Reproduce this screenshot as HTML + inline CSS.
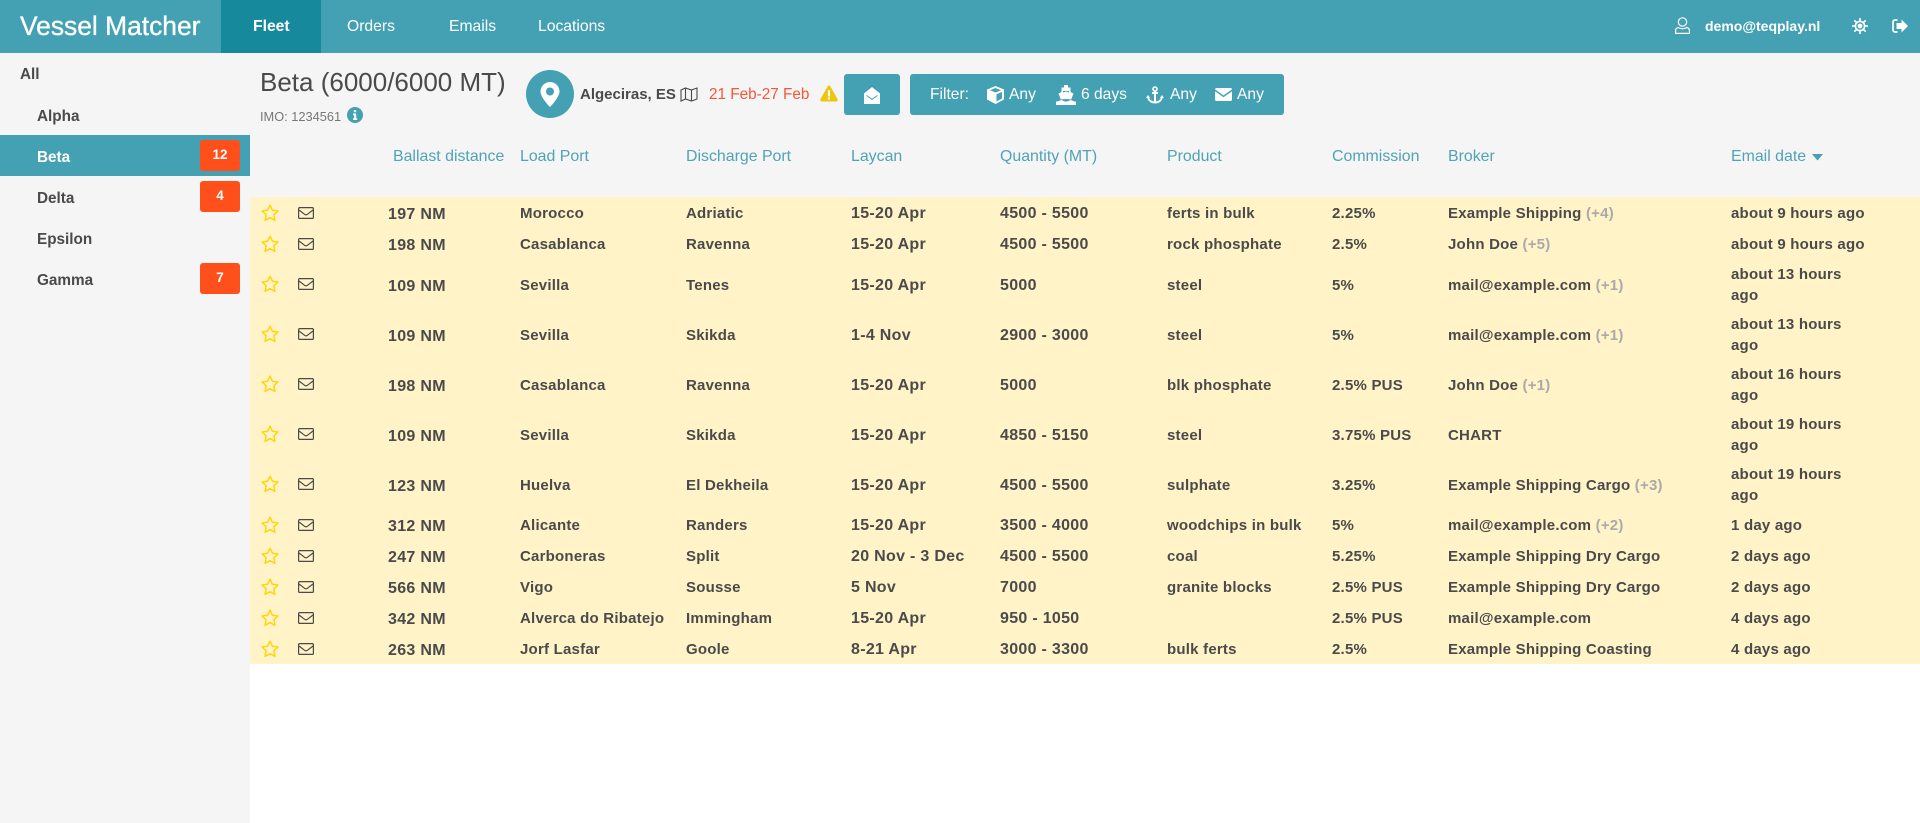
<!DOCTYPE html>
<html><head><meta charset="utf-8"><title>Vessel Matcher</title>
<style>
*{box-sizing:border-box}
html,body{margin:0;padding:0;width:1920px;height:823px;overflow:hidden;background:#fff;font-family:"Liberation Sans",sans-serif;color:#4a4a4a}
.a{position:absolute;white-space:nowrap}
svg{position:absolute;display:block}
#nav{left:0;top:0;width:1920px;height:53px;background:#43a1b3}
#active{left:221px;top:0;width:100px;height:53px;background:#168a9c}
.nv{top:17px;font-size:15.7px;line-height:20px;color:#fff}
#side{left:0;top:53px;width:250px;height:770px;background:#f5f5f5}
#head{left:250px;top:53px;width:1670px;height:144px;background:#f5f5f5}
.si{font-size:15.3px;font-weight:bold;line-height:20px;color:#4a4a4a}
.bd{left:200px;width:40px;height:31px;background:#ff4f1a;border-radius:3px;color:#fff;font-weight:bold;font-size:13.5px;text-align:center;line-height:30px}
.th{top:147px;font-size:15.9px;line-height:20px;color:#4fa3b5}
table{position:absolute;left:250px;top:197px;width:1670px;border-collapse:collapse;table-layout:fixed;background:#fff3c7}
td{padding:2px 0 0;font-size:15px;letter-spacing:.22px;font-weight:bold;line-height:21px;vertical-align:middle;white-space:nowrap;color:#4a4a4a;position:relative}
td.n{font-size:16px;letter-spacing:.3px}
td.b{font-size:16px;letter-spacing:.3px;padding-top:4px}
td.i{padding-top:0}
tr.s{height:31px}tr.d{height:50px}
td b{font-weight:bold;color:#aaa}
td svg{position:static;margin-left:11px}
td.m svg{margin-left:0}
.btn{background:#43a1b3;border-radius:3px}
.ft{top:85px;color:#fff;font-size:15.6px;line-height:20px}
</style></head><body>
<svg width="0" height="0" style="position:absolute"><defs>
<symbol id="star" viewBox="0 0 18 18"><path d="M9 1.2l2.400 5 5.500.8-4 3.800 1 5.500L9 13.700l-4.900 2.600 1-5.500-4-3.800 5.500-.8z" fill="none" stroke="#ffd60a" stroke-width="1.500" stroke-linejoin="round"/></symbol>
<symbol id="mail" viewBox="0 0 16 12"><rect x=".6" y=".6" width="14.800" height="10.800" rx="1.200" fill="none" stroke="#4a4a4a" stroke-width="1.200"/><path d="M1 3l5.600 4.300c.8.600 2 .6 2.800 0L15 3" fill="none" stroke="#4a4a4a" stroke-width="1.200"/></symbol>
</defs></svg>

<div class="a" id="nav"></div>
<div class="a" id="active"></div>
<div class="a" style="left:20px;top:10px;font-size:26.4px;line-height:33px;color:#fff;-webkit-text-stroke:.35px #fff">Vessel Matcher</div>
<div class="a nv" style="left:253px;font-weight:bold">Fleet</div>
<div class="a nv" style="left:347px">Orders</div>
<div class="a nv" style="left:449px">Emails</div>
<div class="a nv" style="left:538px">Locations</div>

<svg style="left:1675px;top:17px" width="15" height="17" viewBox="0 0 15 17" fill="none" stroke="#fff" stroke-width="1.200"><circle cx="7.500" cy="5" r="4.200"/><path d="M3.500 10.500c1 1 2.500 1.200 4 1.200s3-.2 4-1.200c1.800.3 2.900 1.400 2.900 3v2.900H.6v-2.900c0-1.600 1.100-2.700 2.900-3z"/></svg>
<div class="a" style="left:1705px;top:17px;font-size:14px;line-height:18px;font-weight:bold;color:#fff">demo@teqplay.nl</div>
<svg style="left:1852px;top:18px" width="16" height="16" viewBox="0 0 16 16"><circle cx="8" cy="8" r="4.600" fill="none" stroke="#fff" stroke-width="1.600"/><circle cx="8" cy="8" r="2.400" fill="#fff"/><path d="M8 0v3M8 13v3M0 8h3M13 8h3M2.300 2.300l2.200 2.200M11.500 11.500l2.200 2.200M2.300 13.700l2.200-2.200M11.500 4.500l2.200-2.200" stroke="#fff" stroke-width="1.600"/></svg>
<svg style="left:1892px;top:19px" width="16" height="14" viewBox="0 0 16 14"><path d="M5.500 1H3a2 2 0 0 0-2 2v8a2 2 0 0 0 2 2h2.500" fill="none" stroke="#fff" stroke-width="1.700"/><path d="M9.500 .5L16 7l-6.500 6.500V10H4.500V4h5z" fill="#fff"/></svg>

<div class="a" id="side"></div>
<div class="a" id="head"></div>
<div class="a" style="left:0;top:135px;width:250px;height:41px;background:#43a1b3"></div>
<div class="a si" style="left:20px;top:65px">All</div>
<div class="a si" style="left:37px;top:107px">Alpha</div>
<div class="a si" style="left:37px;top:148px;color:#fff">Beta</div>
<div class="a si" style="left:37px;top:189px">Delta</div>
<div class="a si" style="left:37px;top:230px">Epsilon</div>
<div class="a si" style="left:37px;top:271px">Gamma</div>
<div class="a bd" style="top:140px">12</div>
<div class="a bd" style="top:181px">4</div>
<div class="a bd" style="top:263px">7</div>

<div class="a" style="left:260px;top:65px;font-size:26px;line-height:34px;color:#4a4a4a">Beta (6000/6000 MT)</div>
<div class="a" style="left:260px;top:108px;font-size:12.800px;line-height:17px;color:#777">IMO: 1234561</div>
<svg style="left:347px;top:107px" width="16" height="16" viewBox="0 0 16 16"><circle cx="8" cy="8" r="8" fill="#43a1b3"/><rect x="6.800" y="3" width="2.400" height="2.200" fill="#fff"/><path d="M6 6.500h3.200V11.200h1V13H6v-1.800h1V8.200H6z" fill="#fff"/></svg>

<div class="a" style="left:526px;top:70px;width:48px;height:48px;border-radius:50%;background:#43a1b3"></div>
<svg style="left:540px;top:82px" width="20" height="25" viewBox="0 0 20 25"><path fill-rule="evenodd" d="M10 0a9.500 9.500 0 0 1 9.500 9.500C19.500 14 14 21 10 25 6 21 .5 14 .5 9.500A9.500 9.500 0 0 1 10 0zm0 5.500a4 4 0 1 0 0 8 4 4 0 0 0 0-8z" fill="#fff"/></svg>
<div class="a" style="left:580px;top:85px;font-size:15px;line-height:19px;font-weight:bold;color:#4a4a4a">Algeciras, ES</div>
<svg style="left:680px;top:87px" width="18" height="15" viewBox="0 0 18 15" fill="none" stroke="#4a4a4a" stroke-width="1.100"><path d="M1 3l4.500-2 6 2L17 1v11l-5.500 2-6-2L1 14zM5.500 1v11M11.500 3v11"/></svg>
<div class="a" style="left:709px;top:85px;font-size:15.300px;line-height:19px;color:#f5573b">21 Feb-27 Feb</div>
<svg style="left:820px;top:85px" width="18" height="17" viewBox="0 0 18 17"><path d="M9 .5c.6 0 1 .3 1.300.8l7.300 13c.5 1-.1 2.200-1.300 2.200H1.700c-1.200 0-1.800-1.200-1.300-2.200l7.300-13C8 .8 8.400.5 9 .5z" fill="#eec60f"/><rect x="8" y="5" width="2" height="6.500" fill="#fff"/><rect x="8" y="12.500" width="2" height="2" fill="#fff"/></svg>

<div class="a btn" style="left:844px;top:74px;width:56px;height:41px"></div>
<svg style="left:864px;top:87px" width="16" height="17" viewBox="0 0 16 17"><path d="M0 6.500L8 0l8 6.500V17H0z" fill="#fff"/><path d="M2.500 8.500L8 12.300l5.500-3.800" fill="none" stroke="#43a1b3" stroke-width="1"/></svg>
<div class="a btn" style="left:910px;top:74px;width:374px;height:41px"></div>
<div class="a ft" style="left:930px">Filter:</div>
<svg style="left:987px;top:86px" width="17" height="18" viewBox="0 0 17 18"><path d="M8.500 0L17 3.500v10L8.500 18 0 13.500v-10zM8.500 2L3 4.200l5.500 2.300L14 4.200zM9.500 8.200V15.500l5.500-3V6z" fill="#fff" fill-rule="evenodd"/></svg>
<div class="a ft" style="left:1009px">Any</div>
<svg style="left:1056px;top:85px" width="20" height="20" viewBox="0 0 20 20"><path d="M8 0h4v2.500h2.500V7l3 1.500-2.300 6c-1.700 0-3-.5-5.200-.5s-3.500.5-5.200.5L2.500 8.500l3-1.500V2.500H8z" fill="#fff"/><path d="M7 6h6v1.500l-3-1-3 1z" fill="#43a1b3"/><path d="M0 16.500c3.500 0 3-1.300 5-1.300s2.500 1.300 5 1.300 3-1.300 5-1.300 1.500 1.300 5 1.300V20H0z" fill="#fff"/></svg>
<div class="a ft" style="left:1081px">6 days</div>
<svg style="left:1146px;top:86px" width="18" height="18" viewBox="0 0 18 18"><circle cx="9" cy="3" r="2" fill="none" stroke="#fff" stroke-width="1.600"/><path d="M6 7h6M9 5v11.500" stroke="#fff" stroke-width="2"/><path d="M2 10c0 4 3 6.500 7 6.500s7-2.500 7-6.500" fill="none" stroke="#fff" stroke-width="2"/><path d="M0 12l2-3 2 3zM14 12l2-3 2 3z" fill="#fff"/></svg>
<div class="a ft" style="left:1170px">Any</div>
<svg style="left:1215px;top:88px" width="17" height="13" viewBox="0 0 17 13"><path d="M1.500 0h14c.8 0 1.500.6 1.500 1.400L8.500 7.500 0 1.400C0 .6.700 0 1.500 0z" fill="#fff"/><path d="M0 3.200v8.300c0 .8.700 1.500 1.500 1.500h14c.8 0 1.500-.7 1.500-1.500V3.200L8.500 9.300z" fill="#fff"/></svg>
<div class="a ft" style="left:1237px">Any</div>

<div class="a th" style="left:393px">Ballast distance</div>
<div class="a th" style="left:520px">Load Port</div>
<div class="a th" style="left:686px">Discharge Port</div>
<div class="a th" style="left:851px">Laycan</div>
<div class="a th" style="left:1000px">Quantity (MT)</div>
<div class="a th" style="left:1167px">Product</div>
<div class="a th" style="left:1332px">Commission</div>
<div class="a th" style="left:1448px">Broker</div>
<div class="a th" style="left:1731px">Email date</div>
<svg style="left:1812px;top:154px" width="11" height="7" viewBox="0 0 11 7"><path d="M0 0h11L5.500 6.500z" fill="#43a1b3"/></svg>

<table>
<colgroup><col style="width:48px"><col style="width:90px"><col style="width:132px"><col style="width:166px"><col style="width:165px"><col style="width:149px"><col style="width:167px"><col style="width:165px"><col style="width:116px"><col style="width:283px"><col style="width:189px"></colgroup>
<tr class="s"><td class="i"><svg width="18" height="18"><use href="#star"/></svg></td><td class="m i"><svg width="16" height="12"><use href="#mail"/></svg></td><td class="b">197 NM</td><td>Morocco</td><td>Adriatic</td><td class="n">15-20 Apr</td><td class="n">4500 - 5500</td><td>ferts in bulk</td><td>2.25%</td><td>Example Shipping <b>(+4)</b></td><td>about 9 hours ago</td></tr>
<tr class="s"><td class="i"><svg width="18" height="18"><use href="#star"/></svg></td><td class="m i"><svg width="16" height="12"><use href="#mail"/></svg></td><td class="b">198 NM</td><td>Casablanca</td><td>Ravenna</td><td class="n">15-20 Apr</td><td class="n">4500 - 5500</td><td>rock phosphate</td><td>2.5%</td><td>John Doe <b>(+5)</b></td><td>about 9 hours ago</td></tr>
<tr class="d"><td class="i"><svg width="18" height="18"><use href="#star"/></svg></td><td class="m i"><svg width="16" height="12"><use href="#mail"/></svg></td><td class="b">109 NM</td><td>Sevilla</td><td>Tenes</td><td class="n">15-20 Apr</td><td class="n">5000</td><td>steel</td><td>5%</td><td>mail@example.com <b>(+1)</b></td><td>about 13 hours<br>ago</td></tr>
<tr class="d"><td class="i"><svg width="18" height="18"><use href="#star"/></svg></td><td class="m i"><svg width="16" height="12"><use href="#mail"/></svg></td><td class="b">109 NM</td><td>Sevilla</td><td>Skikda</td><td class="n">1-4 Nov</td><td class="n">2900 - 3000</td><td>steel</td><td>5%</td><td>mail@example.com <b>(+1)</b></td><td>about 13 hours<br>ago</td></tr>
<tr class="d"><td class="i"><svg width="18" height="18"><use href="#star"/></svg></td><td class="m i"><svg width="16" height="12"><use href="#mail"/></svg></td><td class="b">198 NM</td><td>Casablanca</td><td>Ravenna</td><td class="n">15-20 Apr</td><td class="n">5000</td><td>blk phosphate</td><td>2.5% PUS</td><td>John Doe <b>(+1)</b></td><td>about 16 hours<br>ago</td></tr>
<tr class="d"><td class="i"><svg width="18" height="18"><use href="#star"/></svg></td><td class="m i"><svg width="16" height="12"><use href="#mail"/></svg></td><td class="b">109 NM</td><td>Sevilla</td><td>Skikda</td><td class="n">15-20 Apr</td><td class="n">4850 - 5150</td><td>steel</td><td>3.75% PUS</td><td>CHART</td><td>about 19 hours<br>ago</td></tr>
<tr class="d"><td class="i"><svg width="18" height="18"><use href="#star"/></svg></td><td class="m i"><svg width="16" height="12"><use href="#mail"/></svg></td><td class="b">123 NM</td><td>Huelva</td><td>El Dekheila</td><td class="n">15-20 Apr</td><td class="n">4500 - 5500</td><td>sulphate</td><td>3.25%</td><td>Example Shipping Cargo <b>(+3)</b></td><td>about 19 hours<br>ago</td></tr>
<tr class="s"><td class="i"><svg width="18" height="18"><use href="#star"/></svg></td><td class="m i"><svg width="16" height="12"><use href="#mail"/></svg></td><td class="b">312 NM</td><td>Alicante</td><td>Randers</td><td class="n">15-20 Apr</td><td class="n">3500 - 4000</td><td>woodchips in bulk</td><td>5%</td><td>mail@example.com <b>(+2)</b></td><td>1 day ago</td></tr>
<tr class="s"><td class="i"><svg width="18" height="18"><use href="#star"/></svg></td><td class="m i"><svg width="16" height="12"><use href="#mail"/></svg></td><td class="b">247 NM</td><td>Carboneras</td><td>Split</td><td class="n">20 Nov - 3 Dec</td><td class="n">4500 - 5500</td><td>coal</td><td>5.25%</td><td>Example Shipping Dry Cargo</td><td>2 days ago</td></tr>
<tr class="s"><td class="i"><svg width="18" height="18"><use href="#star"/></svg></td><td class="m i"><svg width="16" height="12"><use href="#mail"/></svg></td><td class="b">566 NM</td><td>Vigo</td><td>Sousse</td><td class="n">5 Nov</td><td class="n">7000</td><td>granite blocks</td><td>2.5% PUS</td><td>Example Shipping Dry Cargo</td><td>2 days ago</td></tr>
<tr class="s"><td class="i"><svg width="18" height="18"><use href="#star"/></svg></td><td class="m i"><svg width="16" height="12"><use href="#mail"/></svg></td><td class="b">342 NM</td><td>Alverca do Ribatejo</td><td>Immingham</td><td class="n">15-20 Apr</td><td class="n">950 - 1050</td><td></td><td>2.5% PUS</td><td>mail@example.com</td><td>4 days ago</td></tr>
<tr class="s"><td class="i"><svg width="18" height="18"><use href="#star"/></svg></td><td class="m i"><svg width="16" height="12"><use href="#mail"/></svg></td><td class="b">263 NM</td><td>Jorf Lasfar</td><td>Goole</td><td class="n">8-21 Apr</td><td class="n">3000 - 3300</td><td>bulk ferts</td><td>2.5%</td><td>Example Shipping Coasting</td><td>4 days ago</td></tr>
</table>
</body></html>
